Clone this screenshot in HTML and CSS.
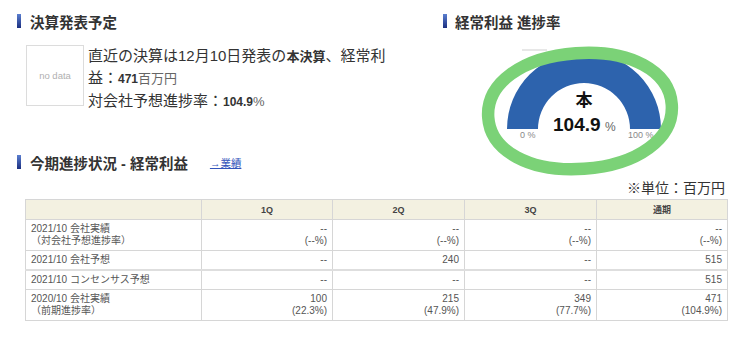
FILE: index.html
```html
<!DOCTYPE html>
<html lang="ja">
  <head>
    <meta charset="UTF-8" />
    <meta name="viewport" content="width=device-width, initial-scale=1.0" />
    <title>経常利益 進捗率</title>
    <link rel="stylesheet" href="styles.css">
  </head>
  <body>
    <div class="top">
      <div class="left">
        <h2 class="hd">決算発表予定</h2>
        <div class="plan">
          <div class="nodata">no data</div>
          <p class="plan-text">直近の決算は12月10日発表の<b class="em">本決算</b>、経常利益：<b class="num">471</b><span class="yen">百万円</span><br>対会社予想進捗率：<b class="num">104.9</b><span class="yen">%</span></p>
        </div>
      </div>
      <div class="right">
        <h2 class="hd hd-right">経常利益 進捗率</h2>
        <svg class="gauge" width="306" height="100" viewBox="0 0 306 100">
          <line x1="79" y1="10" x2="104" y2="10" stroke="#cfcfcf" stroke-width="1" />
          <path d="M 64 89 A 77 77 0 0 1 218 89 L 187 89 A 46 46 0 0 0 95 89 Z" fill="#2d63ad" />
          <text x="141" y="66" class="g-kind" text-anchor="middle">本</text>
          <text x="110" y="91" class="g-val">104.9</text>
          <text x="162" y="91" class="g-pct">%</text>
          <text x="77" y="98" class="g-axis">0 %</text>
          <text x="185" y="98" class="g-axis">100 %</text>
          <!-- hand-drawn style marker ring -->
          <path d="M 45 71 C 45 37, 83 13, 137 13 C 191 13, 229 37, 229 71 C 229 105, 191 129, 137 129 C 83 129, 45 105, 45 71 Z" fill="none" stroke="#7bd277" stroke-width="12.5" transform="rotate(-4 137 71)" />
        </svg>
      </div>
    </div>

    <div class="progress">
      <h2 class="hd">今期進捗状況 - 経常利益<a class="more" href="#">→業績</a></h2>
      <div class="unit">※単位：百万円</div>
      <table class="tbl">
        <colgroup>
          <col class="c-lbl"><col class="c-q1"><col class="c-q"><col class="c-q"><col class="c-q1">
        </colgroup>
        <tr>
          <th></th><th>1Q</th><th>2Q</th><th>3Q</th><th>通期</th>
        </tr>
        <tr>
          <td class="lbl">2021/10 会社実績<br>（対会社予想進捗率）</td>
          <td>--<br>(--%)</td>
          <td>--<br>(--%)</td>
          <td>--<br>(--%)</td>
          <td>--<br>(--%)</td>
        </tr>
        <tr>
          <td class="lbl">2021/10 会社予想</td>
          <td>--</td><td>240</td><td>--</td><td>515</td>
        </tr>
        <tr class="sep">
          <td class="lbl">2021/10 コンセンサス予想</td>
          <td>--</td><td>--</td><td>--</td><td>515</td>
        </tr>
        <tr>
          <td class="lbl">2020/10 会社実績<br>（前期進捗率）</td>
          <td>100<br>(22.3%)</td>
          <td>215<br>(47.9%)</td>
          <td>349<br>(77.7%)</td>
          <td>471<br>(104.9%)</td>
        </tr>
      </table>
    </div>
  </body>
</html>
```

FILE: styles.css
```css
body {
  margin: 0;
  font-family: "Liberation Sans", "Noto Sans CJK JP", sans-serif;
  color: #333;
  background: #fff;
}
.top {
  display: flex;
  align-items: flex-start;
  padding: 12px 0 0 17px;
}
.left {
  width: 426px;
}
.right {
  flex: 1;
}
.hd {
  display: flex;
  align-items: center;
  height: 18px;
  margin: 0;
  font-size: 14.5px;
  font-weight: bold;
  color: #333;
}
.hd::before {
  content: "";
  width: 4px;
  height: 14px;
  margin-right: 9px;
  background: linear-gradient(#5b7fd0, #1b2f80);
}
.hd-right::before {
  margin-right: 8px;
}
.plan {
  display: flex;
  align-items: flex-start;
  margin: 15px 0 0 9px;
}
.nodata {
  width: 56px;
  height: 59px;
  border: 1px solid #dcdcdc;
  display: flex;
  align-items: center;
  justify-content: center;
  font-size: 9.5px;
  color: #b0b0b0;
}
.plan-text {
  width: 305px;
  margin: 0 0 0 4px;
  font-size: 15px;
  line-height: 21px;
  color: #333;
}
.plan-text .em {
  font-size: 13px;
}
.plan-text .num {
  font-size: 12px;
}
.plan-text .yen {
  font-size: 13px;
  color: #666;
}
.gauge {
  display: block;
  margin-top: 10px;
  overflow: visible;
}
.g-kind {
  font-size: 17px;
  font-weight: bold;
  fill: #111;
}
.g-val {
  font-size: 19px;
  font-weight: bold;
  fill: #111;
}
.g-pct {
  font-size: 12px;
  fill: #666;
}
.g-axis {
  font-size: 9px;
  fill: #888;
}
.progress {
  margin-top: 13px;
  padding-left: 17px;
}
.more {
  margin-left: 22px;
  font-size: 10.5px;
  font-weight: normal;
  color: #3355bb;
  text-decoration: underline;
}
.unit {
  margin-top: 7px;
  padding-right: 24px;
  text-align: right;
  font-size: 14px;
  line-height: 20px;
  color: #333;
}
.tbl {
  width: 702px;
  margin: 1px 0 0 8px;
  border-collapse: collapse;
  table-layout: fixed;
  font-size: 10px;
  color: #555;
}
.c-lbl {
  width: 176px;
}
.c-q1 {
  width: 131px;
}
.c-q {
  width: 132px;
}
.tbl th,
.tbl td {
  border: 1px solid #d6d6d6;
}
.tbl th {
  height: 19px;
  padding: 0;
  background: #f3f1e1;
  font-size: 9px;
  color: #444;
}
.tbl td {
  padding: 3px 5px;
  line-height: 12px;
  text-align: right;
  vertical-align: top;
}
.tbl td.lbl {
  text-align: left;
}
.tbl tr.sep td {
  border-top: 2px solid #dedede;
}
```
